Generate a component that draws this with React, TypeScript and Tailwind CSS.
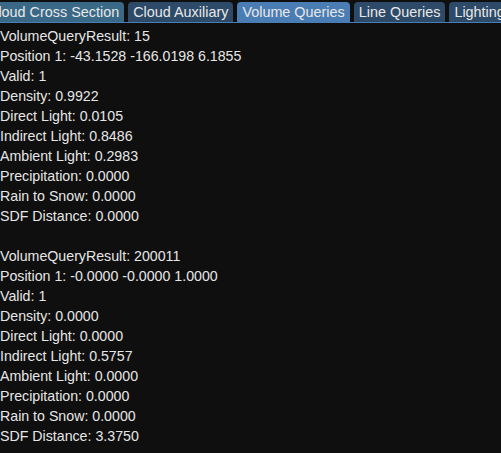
const TABS = [
  { label: "Cloud Cross Section", tone: "hover" },
  { label: "Cloud Auxiliary", tone: "idle" },
  { label: "Volume Queries", tone: "active" },
  { label: "Line Queries", tone: "idle" },
  { label: "Lighting", tone: "idle" },
];

const RESULTS = [
  {
    id: "15",
    position: "-43.1528 -166.0198 6.1855",
    valid: 1,
    density: "0.9922",
    direct: "0.0105",
    indirect: "0.8486",
    ambient: "0.2983",
    precipitation: "0.0000",
    rainToSnow: "0.0000",
    sdf: "0.0000",
  },
  {
    id: "200011",
    position: "-0.0000 -0.0000 1.0000",
    valid: 1,
    density: "0.0000",
    direct: "0.0000",
    indirect: "0.5757",
    ambient: "0.0000",
    precipitation: "0.0000",
    rainToSnow: "0.0000",
    sdf: "3.3750",
  },
];

function Tab({ label, tone }: { label: string; tone: string }) {
  const bg =
    tone === "active"
      ? "bg-[#4a7db3]"
      : tone === "hover"
      ? "bg-[#3a6887]"
      : "bg-[#2d4a68]";
  return (
    <div
      className={`${bg} h-5 px-[5px] rounded-t-[4px] text-[#e8e8e8] text-[14.4px] leading-5 whitespace-nowrap shrink-0`}
    >
      {label}
    </div>
  );
}

export default function App() {
  return (
    <div
      className="w-[501px] h-[453px] bg-[#0f0f0f] text-[#e6e6e6] text-[14.2px] overflow-hidden"
      style={{ fontFamily: '"Liberation Sans", Arial, sans-serif' }}
    >
      <div className="pt-[2px] border-b border-[#4a7db3]">
        <div className="flex gap-[4px] ml-[-17px]">
          {TABS.map((t) => (
            <Tab key={t.label} label={t.label} tone={t.tone} />
          ))}
        </div>
      </div>
      <div className="flex flex-col leading-5 pt-[3px]">
        {RESULTS.map((r, i) => (
          <div key={r.id} className={i > 0 ? "mt-5" : ""}>
            <div>VolumeQueryResult: {r.id}</div>
            <div>Position 1: {r.position}</div>
            <div>Valid: {r.valid}</div>
            <div>Density: {r.density}</div>
            <div>Direct Light: {r.direct}</div>
            <div>Indirect Light: {r.indirect}</div>
            <div>Ambient Light: {r.ambient}</div>
            <div>Precipitation: {r.precipitation}</div>
            <div>Rain to Snow: {r.rainToSnow}</div>
            <div>SDF Distance: {r.sdf}</div>
          </div>
        ))}
      </div>
    </div>
  );
}
